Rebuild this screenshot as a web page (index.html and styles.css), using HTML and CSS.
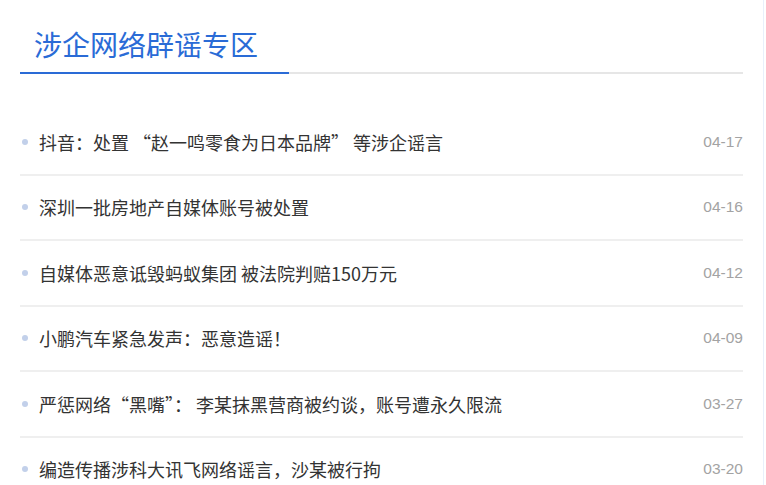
FILE: index.html
```html
<!DOCTYPE html>
<html lang="zh-CN">
<head>
  <meta charset="UTF-8" />
  <title>涉企网络辟谣专区</title>
  <link rel="stylesheet" href="styles.css">
</head>
<body>

  <div class="panel">
    <div class="panel-head">
      <h2 class="panel-title">涉企网络辟谣专区</h2>
    </div>

    <ul class="news-list">
      <li class="news-item"><a href="#">抖音：处置 “赵一鸣零食为日本品牌” 等涉企谣言</a><span class="date">04-17</span></li>
      <li class="news-item"><a href="#">深圳一批房地产自媒体账号被处置</a><span class="date">04-16</span></li>
      <li class="news-item"><a href="#">自媒体恶意诋毁蚂蚁集团 被法院判赔150万元</a><span class="date">04-12</span></li>
      <li class="news-item"><a href="#">小鹏汽车紧急发声：恶意造谣！</a><span class="date">04-09</span></li>
      <li class="news-item"><a href="#">严惩网络“黑嘴”： 李某抹黑营商被约谈，账号遭永久限流</a><span class="date">03-27</span></li>
      <li class="news-item"><a href="#">编造传播涉科大讯飞网络谣言，沙某被行拘</a><span class="date">03-20</span></li>
    </ul>
  </div>

</body>
</html>
```

FILE: styles.css
```css
body {
  margin: 0;
  font-family: "Microsoft YaHei", "Noto Sans CJK SC", "Liberation Sans", sans-serif;
  background: #fff;
}

.panel {
  box-sizing: border-box;
  width: 764px;
  min-height: 485px;
  padding: 0 20px;
  border-right: 1px solid #e8f0fb;
}

.panel-head {
  height: 72px;
  border-bottom: 2px solid #e6e6e6;
}

.panel-title {
  display: inline-block;
  box-sizing: border-box;
  width: 269px;
  height: 74px;
  margin: 0;
  padding: 24px 0 0 14px;
  font-size: 28px;
  font-weight: normal;
  line-height: 40px;
  color: #2a6bd6;
  border-bottom: 2px solid #2a6bd6;
}

.news-list {
  list-style: none;
  margin: 36px 0 0;
  padding: 0;
}

.news-item {
  display: flex;
  align-items: center;
  justify-content: space-between;
  height: 63.5px;
  border-bottom: 2px solid #efefef;
}

.news-item a {
  position: relative;
  padding-left: 19px;
  font-size: 18px;
  color: #333;
  text-decoration: none;
}

.news-item a::before {
  content: "";
  position: absolute;
  left: 2px;
  top: 50%;
  width: 6px;
  height: 6px;
  margin-top: -3px;
  border-radius: 50%;
  background: #c2d0ea;
}

.date {
  font-family: "Liberation Sans", sans-serif;
  font-size: 15.5px;
  color: #a3a3a3;
}
```
